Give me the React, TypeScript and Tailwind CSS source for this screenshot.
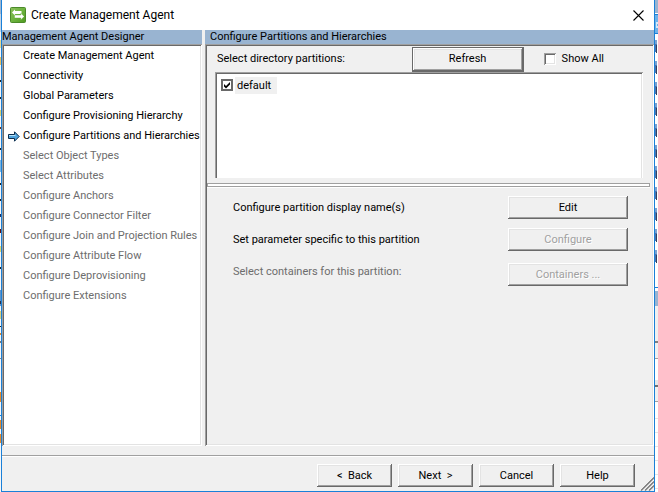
import { useState } from "react";
import type { ReactNode } from "react";

const steps = [
  "Create Management Agent",
  "Connectivity",
  "Global Parameters",
  "Configure Provisioning Hierarchy",
  "Configure Partitions and Hierarchies",
  "Select Object Types",
  "Select Attributes",
  "Configure Anchors",
  "Configure Connector Filter",
  "Configure Join and Projection Rules",
  "Configure Attribute Flow",
  "Configure Deprovisioning",
  "Configure Extensions",
];
const currentStep = 4;

const raised =
  "bg-[#f0f0f0] shadow-[inset_-1px_-1px_#696969,inset_1px_1px_#fff,inset_-2px_-2px_#a0a0a0,inset_2px_2px_#e3e3e3]";
const sunken = "shadow-[inset_1px_1px_#a0a0a0,inset_-1px_-1px_#fff,inset_2px_2px_#696969,inset_-2px_-2px_#e3e3e3]";

function Button({ children, className = "", disabled = false }: { children: ReactNode; className?: string; disabled?: boolean }) {
  return (
    <button
      type="button"
      disabled={disabled}
      className={`${raised} h-[23px] whitespace-pre text-center text-black disabled:text-[#a0a0a0] disabled:[text-shadow:1px_1px_#fff] ${className}`}
    >
      {children}
    </button>
  );
}

function AppIcon() {
  return (
    <svg width="16" height="16" viewBox="0 0 16 16" aria-hidden="true">
      <defs>
        <linearGradient id="leaf" x1="0" y1="0" x2="1" y2="1">
          <stop offset="0" stopColor="#8cc05a" />
          <stop offset="0.5" stopColor="#6db33f" />
          <stop offset="1" stopColor="#4f9a20" />
        </linearGradient>
      </defs>
      <rect x="0.5" y="0.5" width="15" height="15" rx="1" fill="url(#leaf)" stroke="#4b8a2a" />
      <path d="M2 5.5 L5 2.5 V4 H11.5 V7 H5 V8.5 Z" fill="#fff" />
      <path d="M14.2 9.5 L10.8 6 V8 H4.5 V11 H10.8 V13 Z" fill="#fff" stroke="#5ba52c" strokeWidth="0.4" />
    </svg>
  );
}

function StepArrow() {
  return (
    <svg width="12" height="11" viewBox="0 0 12 11" aria-hidden="true">
      <path d="M0.5 3.5 H6.5 V0.8 L11.2 5.5 L6.5 10.2 V7.5 H0.5 Z" fill="#4fa3dc" stroke="#0c2c4c" />
      <path d="M1 4.5 H7.5" stroke="#b5e2fa" />
    </svg>
  );
}

function LeftSliver() {
  return (
    <svg className="h-[492px] w-px shrink-0" viewBox="0 0 1 492" preserveAspectRatio="none" aria-hidden="true">
      <rect width="1" height="492" fill="#f4f6f8" />
      <rect width="1" height="14" fill="#9fb6d0" />
      <rect y="14" width="1" height="18" fill="#c5d5e6" />
      <rect y="40" width="1" height="8" fill="#e8d890" />
      <rect y="57" width="1" height="8" fill="#e8c060" />
      <rect y="80" width="1" height="2" fill="#222" />
      <rect y="97" width="1" height="2" fill="#222" />
      <rect y="110" width="1" height="6" fill="#d8d070" />
      <rect y="127" width="1" height="2" fill="#703010" />
      <rect y="148" width="1" height="2" fill="#222" />
      <rect y="160" width="1" height="12" fill="#7ab4e0" />
      <rect y="183" width="1" height="2" fill="#222" />
      <rect y="199" width="1" height="2" fill="#222" />
      <rect y="214" width="1" height="3" fill="#203060" />
      <rect y="229" width="1" height="4" fill="#601010" />
      <rect y="246" width="1" height="6" fill="#e0d870" />
      <rect y="267" width="1" height="2" fill="#222" />
      <rect y="290" width="1" height="16" fill="#5b93cc" />
      <rect y="301" width="1" height="3" fill="#26324a" />
      <rect y="311" width="1" height="8" fill="#d8d080" />
      <rect y="326" width="1" height="1" fill="#222" />
      <rect y="333" width="1" height="2" fill="#e08a28" />
      <rect y="341" width="1" height="2" fill="#777" />
      <rect y="358" width="1" height="1" fill="#888" />
      <rect y="392" width="1" height="10" fill="#e88a28" />
      <rect y="415" width="1" height="1" fill="#1a80d8" />
      <rect y="420" width="1" height="9" fill="#e88a28" />
      <rect y="434" width="1" height="9" fill="#e88a28" />
    </svg>
  );
}

function RightSliver() {
  const marks = [40, 61, 82, 103, 124, 145, 166, 187, 208, 229, 250];
  return (
    <svg className="h-[492px] w-[3px] shrink-0" viewBox="0 0 3 492" preserveAspectRatio="none" aria-hidden="true">
      <rect width="3" height="492" fill="#fff" />
      <rect width="3" height="13" fill="#99b4d1" />
      <rect y="14" width="3" height="1" fill="#1a80d8" />
      <rect y="15" width="3" height="18" fill="#6cb2ea" />
      <rect x="1" y="22" width="2" height="6" fill="#d4e9f9" />
      <rect x="2" y="24" width="1" height="2" fill="#6cb2ea" />
      <rect y="33" width="3" height="1" fill="#1a80d8" />
      {marks.map((y) => (
        <g key={y}>
          <rect y={y} width="2" height="4" fill="#7ba0cf" />
          <rect y={y + 4} width="2" height="8" fill="#4d74b2" />
          <rect x="1" y={y + 5} width="1" height="8" fill="#33435f" />
        </g>
      ))}
      <rect y="287" width="3" height="1" fill="#1a80d8" />
      <rect y="291" width="3" height="15" fill="#99b4d1" />
      <rect y="306" width="3" height="52" fill="#f0f0f0" />
      <rect y="341" width="3" height="2" fill="#808080" />
      <rect y="358" width="3" height="1" fill="#a0a0a0" />
      <rect y="359" width="3" height="25" fill="#fff" />
      <rect y="380" width="3" height="6" fill="#e8e8e8" />
      <rect y="385" width="3" height="2" fill="#707070" />
      <rect y="387" width="3" height="14" fill="#f0f0f0" />
      <rect y="401" width="3" height="1" fill="#a0a0a0" />
      {[418, 432, 446, 460, 474, 488].map((y) => (
        <rect key={y} y={y} width="3" height="1" fill="#e4e4e4" />
      ))}
    </svg>
  );
}

function TitleBar() {
  return (
    <header className="flex h-[30px] items-center bg-white pl-2 pr-[10px]">
      <AppIcon />
      <h1 className="ml-[5px] flex-1 font-[Roboto,'Open_Sans',sans-serif] text-[12px] leading-4 text-black">
        Create Management Agent
      </h1>
      <button type="button" aria-label="Close" className="flex size-[11px] items-center justify-center">
        <svg width="11" height="11" viewBox="0 0 11 11" aria-hidden="true">
          <path d="M0.5 0.5 L10.5 10.5 M10.5 0.5 L0.5 10.5" stroke="#000" strokeWidth="1.1" fill="none" />
        </svg>
      </button>
    </header>
  );
}

function StepList() {
  return (
    <nav aria-label="Steps" className="flex w-[200px] shrink-0 flex-col">
      <h2 className="h-[14px] bg-[#99b4d1] leading-[14px]">Management Agent Designer</h2>
      <ol className={`flex-1 bg-white p-[2px] ${sunken}`}>
        {steps.map((step, i) => (
          <li
            key={step}
            aria-current={i === currentStep ? "step" : undefined}
            className={`flex h-5 items-center whitespace-nowrap ${i > currentStep ? "text-[#6d6d6d]" : "text-black"}`}
          >
            <span className="flex w-[19px] shrink-0 justify-center">{i === currentStep && <StepArrow />}</span>
            {step}
          </li>
        ))}
      </ol>
    </nav>
  );
}

function Check({ id, checked, onChange, className }: { id: string; checked: boolean; onChange: (v: boolean) => void; className: string }) {
  return (
    <span className="grid size-3 shrink-0">
      <input
        id={id}
        type="checkbox"
        checked={checked}
        onChange={(e) => onChange(e.target.checked)}
        className={`col-start-1 row-start-1 size-3 appearance-none bg-white ${className}`}
      />
      {checked && (
        <svg className="pointer-events-none col-start-1 row-start-1" width="12" height="12" viewBox="0 0 12 12" aria-hidden="true">
          <path d="M3 5 L5 7 L9 3 V5.5 L5 9.5 L3 7.5 Z" fill="#000" />
        </svg>
      )}
    </span>
  );
}

function Partitions() {
  const [showAll, setShowAll] = useState(false);
  const [isDefault, setIsDefault] = useState(true);
  return (
    <main className="flex min-w-0 flex-1 flex-col">
      <h2 className="h-[14px] bg-[#99b4d1] pl-[5px] leading-[14px]">Configure Partitions and Hierarchies</h2>
      <div className={`flex-1 p-[2px] ${sunken}`}>
        <div className="flex h-[26px] items-center pl-[10px] pr-12">
          <span className="flex-1">Select directory partitions:</span>
          <span className="flex border border-[#696969]">
            <Button className="h-[22px] w-[110px]">Refresh</Button>
          </span>
          <div className="ml-5 flex items-center gap-[6px]">
            <Check id="show-all" checked={showAll} onChange={setShowAll} className={sunken} />
            <label htmlFor="show-all">Show All</label>
          </div>
        </div>
        <div className="ml-2 mr-[9px] h-[106px] bg-white pl-[6px] pt-1 shadow-[inset_1px_1px_#a0a0a0,inset_-1px_0_#fff,inset_2px_2px_#696969,inset_-2px_0_#e3e3e3]">
          <div className="flex h-[18px] items-center gap-[2px]">
            <Check id="default" checked={isDefault} onChange={setIsDefault} className="border-2 border-[#696969]" />
            <label htmlFor="default" className="h-[17px] bg-[#f0f0f0] pl-[2px] pr-[6px] leading-[17px]">
              default
            </label>
          </div>
        </div>
        <div className="mr-[2px] mt-[5px] h-1 border border-[#a0a0a0] bg-white shadow-[0_1px_#fff]" />
        <div className="flex justify-between pl-[26px] pr-6 pt-[9px]">
          <div className="flex flex-col gap-2 leading-6">
            <p>Configure partition display name(s)</p>
            <p>Set parameter specific to this partition</p>
            <p className="text-[#6d6d6d]">Select containers for this partition:</p>
          </div>
          <div className="flex w-[120px] flex-col">
            <Button>Edit</Button>
            <Button className="mt-[9px]" disabled>Configure</Button>
            <Button className="mt-3" disabled>Containers ...</Button>
          </div>
        </div>
      </div>
    </main>
  );
}

export default function App() {
  return (
    <div className="flex min-h-screen w-full overflow-hidden bg-white font-[Roboto,'Liberation_Sans',sans-serif] text-[11px] leading-[14px] text-black">
      <LeftSliver />
      <div className="flex min-w-0 flex-1 flex-col border-x border-b border-[#1a80d8] bg-[#f0f0f0]">
        <TitleBar />
        <div className="flex flex-1 gap-[3px]">
          <StepList />
          <Partitions />
        </div>
        <footer className="mt-[9px] flex h-9 border-t border-[#a0a0a0] shadow-[inset_0_1px_#fff]">
          <div className="flex flex-1 justify-end gap-[6px] pt-2">
            <Button className="w-[75px]">{"<  Back"}</Button>
            <Button className="w-[75px]">{"Next  >"}</Button>
            <Button className="w-[75px]">Cancel</Button>
            <Button className="w-[75px]">Help</Button>
          </div>
          <svg className="ml-[5px] self-end" width="14" height="14" viewBox="0 0 14 14" aria-hidden="true">
            <path d="M1 13.5 L14 0.5 M5 13.5 L14 4.5 M9 13.5 L14 8.5" stroke="#808080" strokeWidth="1.6" />
            <path d="M0 13 L13.5 -0.5 M4 13 L14 3 M8 13 L14 7" stroke="#fff" strokeWidth="0.6" />
          </svg>
        </footer>
      </div>
      <RightSliver />
    </div>
  );
}
